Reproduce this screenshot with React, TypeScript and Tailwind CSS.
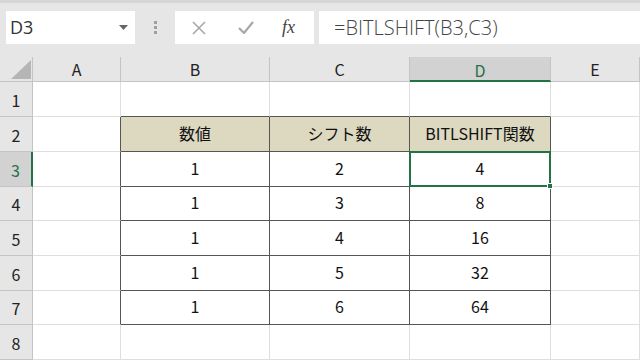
import React from "react";

const cols = ["A", "B", "C", "D", "E"];
const rowHeights = [35, 35, 35, 34, 35, 35, 34, 35];
const data: string[][] = [
  ["数値", "シフト数", "BITLSHIFT関数"],
  ["1", "2", "4"],
  ["1", "3", "8"],
  ["1", "4", "16"],
  ["1", "5", "32"],
  ["1", "6", "64"],
];

const cellFont = { fontFamily: '"Noto Sans CJK JP", "Noto Sans", sans-serif' };
const uiFont = { fontFamily: '"Open Sans", "Noto Sans", sans-serif' };

function Toolbar() {
  return (
    <div className="flex h-[57px] items-start border-t-[3px] border-[#d6d6d6] bg-[#e6e6e6] pt-[8px]">
      <div className="ml-[6px] flex h-[33px] w-[129px] items-center justify-between bg-white pl-[4px] pr-[7px]">
        <span className="text-[18px] text-[#333]" style={uiFont}>
          D3
        </span>
        <svg width="9" height="6" viewBox="0 0 9 6">
          <path d="M0 0 H9 L4.5 5 Z" fill="#666" />
        </svg>
      </div>
      <div className="flex h-[33px] w-[40px] flex-col items-center justify-center gap-[2px]">
        <span className="h-[3px] w-[3px] bg-[#a0a0a0]" />
        <span className="h-[3px] w-[3px] bg-[#a0a0a0]" />
        <span className="h-[3px] w-[3px] bg-[#a0a0a0]" />
      </div>
      <div className="flex h-[33px] w-[139px] items-center bg-white">
        <svg className="ml-[17px]" width="14" height="14" viewBox="0 0 14 14">
          <path d="M1 1 L13 13 M13 1 L1 13" stroke="#a8a8a8" strokeWidth="1.6" />
        </svg>
        <svg className="ml-[32px]" width="16" height="13" viewBox="0 0 16 13">
          <path d="M1 7 L6 12 L15 1" stroke="#a8a8a8" strokeWidth="2.2" fill="none" />
        </svg>
        <span
          className="ml-[28px] text-[18px] italic text-[#444]"
          style={{ fontFamily: '"Liberation Serif", "DejaVu Serif", serif' }}
        >
          fx
        </span>
      </div>
      <div className="ml-[5px] flex h-[33px] flex-1 items-center bg-white pl-[15px]">
        <span className="text-[20px] font-light text-[#444]" style={uiFont}>
          =BITLSHIFT(B3,C3)
        </span>
      </div>
    </div>
  );
}

export default function App() {
  return (
    <div className="h-[360px] w-[640px] overflow-hidden bg-white" style={cellFont}>
      <Toolbar />
      <div className="grid grid-cols-[33px_88px_149px_140px_141px_89px] grid-rows-[25px_35px_35px_35px_34px_35px_35px_34px_35px]">
        {/* corner */}
        <div className="flex items-end justify-end border-b border-r border-[#c4c4c4] bg-[#e6e6e6] pb-[2px] pr-[1px]">
          <svg width="20" height="19" viewBox="0 0 20 19">
            <path d="M20 0 V19 H0 Z" fill="#b5b5b5" />
          </svg>
        </div>
        {cols.map((c) => (
          <div
            key={c}
            className={
              c === "D"
                ? "flex items-center justify-center border-b-2 border-r border-b-[#217346] border-r-[#c4c4c4] bg-[#d2d2d2] pt-[2px] text-[16px] text-[#217346]"
                : "flex items-center justify-center border-b border-r border-[#c4c4c4] bg-[#e6e6e6] text-[16px] text-[#222]"
            }
          >
            {c}
          </div>
        ))}
        {rowHeights.map((_, r) => {
          const row = r + 1;
          const inTable = row >= 2 && row <= 7;
          return (
            <React.Fragment key={row}>
              <div
                className={
                  row === 3
                    ? "flex items-end justify-center border-b border-r-2 border-b-[#c4c4c4] border-r-[#217346] bg-[#d2d2d2] pb-[4px] text-[16px] text-[#217346]"
                    : "flex items-end justify-center border-b border-r border-[#c4c4c4] bg-[#e6e6e6] pb-[4px] text-[16px] text-[#222]"
                }
              >
                {row}
              </div>
              {cols.map((c, ci) => {
                const tableCol = ci >= 1 && ci <= 3;
                const isTable = inTable && tableCol;
                const darkRight = inTable && ci <= 3;
                const darkBottom = tableCol && row <= 7;
                const text = isTable ? data[row - 2][ci - 1] : "";
                const header = row === 2 && tableCol;
                const selected = row === 3 && c === "D";
                return (
                  <div
                    key={c}
                    className={[
                      "relative flex items-end justify-center border-b border-r pb-[6px] text-[16px] text-[#111]",
                      darkRight ? "border-r-[#555]" : "border-r-[#dedede]",
                      darkBottom ? "border-b-[#555]" : "border-b-[#dedede]",
                      header ? "bg-[#ddd8c0]" : "",
                      selected ? "z-10" : "",
                    ].join(" ")}
                  >
                    {text}
                    {selected && (
                      <div className="absolute -left-[1px] -top-[1px] bottom-[-1px] right-[-1px] border-2 border-[#217346]">
                        <div className="absolute -bottom-[4px] -right-[4px] h-[6px] w-[6px] border border-white bg-[#217346]" />
                      </div>
                    )}
                  </div>
                );
              })}
            </React.Fragment>
          );
        })}
      </div>
    </div>
  );
}
